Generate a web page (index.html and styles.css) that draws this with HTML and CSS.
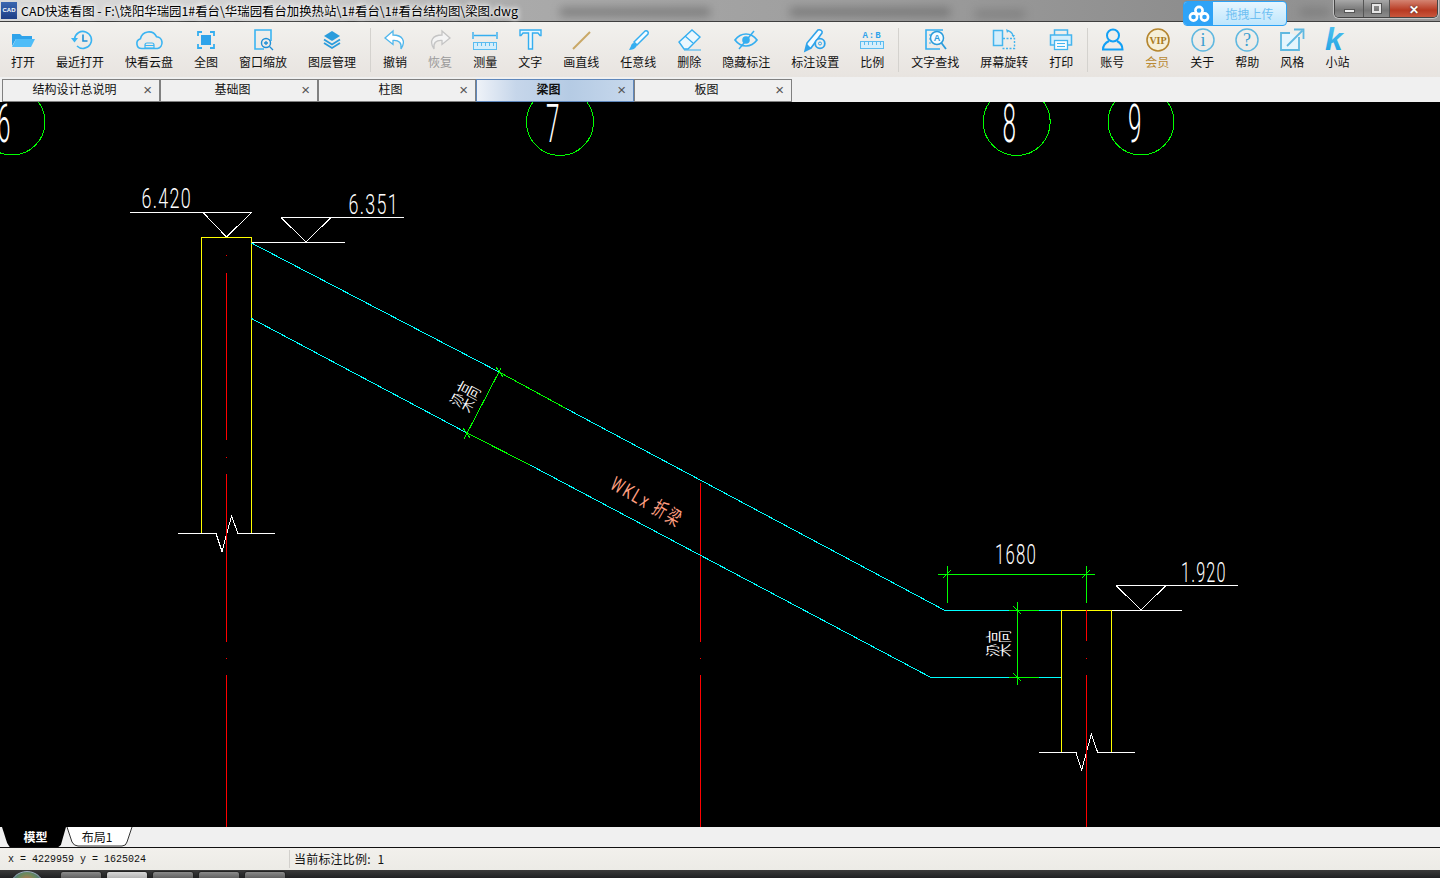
FILE: index.html
```html
<!DOCTYPE html>
<html lang="zh">
<head>
<meta charset="utf-8">
<title>CAD快速看图</title>
<link rel="stylesheet" href="styles.css">
</head>
<body>
<div class="app">
  <header class="titlebar">
    <i class="smear s1"></i><i class="smear s2"></i><i class="smear s3"></i><i class="smear s4"></i>
    <span class="appicon">CAD</span>
    <span class="apptitle">CAD快速看图 - F:\饶阳华瑞园1#看台\华瑞园看台加换热站\1#看台\1#看台结构图\梁图.dwg</span>
    <div class="upload">
      <span class="upload-logo"><svg width="22" height="18" viewBox="0 0 22 18"><g fill="none" stroke="#fff" stroke-width="2.6"><circle cx="11" cy="5.5" r="3.6"/><circle cx="5.5" cy="12" r="3.6"/><circle cx="16.5" cy="12" r="3.6"/></g></svg></span>
      <span class="upload-text">拖拽上传</span>
    </div>
    <div class="winbtns">
      <span class="winbtn min"><i></i></span>
      <span class="winbtn max"><i></i></span>
      <span class="winbtn close">✕</span>
    </div>
  </header>

  <nav class="toolbar">
    <div class="tool"><svg class="ico" viewBox="0 0 30 24"><path d="M4 6h8l2 2h10v3H8l-4 7z" fill="#2fa3ea"/><path d="M4 19 8 11H27L23 19Z" fill="#4fbdf8"/></svg><span>打开</span></div>
    <div class="tool"><svg class="ico" viewBox="0 0 30 24"><path d="M9.5 11a8.5 8.5 0 1 1 2.5 7" fill="none" stroke="#3ab4f2" stroke-width="1.6"/><path d="M6 10h7l-3.5 4.5z" fill="#3ab4f2"/><path d="M18 6.5V13h4.5" fill="none" stroke="#1f8fd6" stroke-width="1.6"/></svg><span>最近打开</span></div>
    <div class="tool"><svg class="ico" viewBox="0 0 30 24"><path d="M8 20.500a5 5 0 0 1-1.500-9.800a8.500 8.500 0 0 1 16-2a6 6 0 0 1 1 11.800z" fill="none" stroke="#3ab4f2" stroke-width="1.600"/><path d="M11 20v-3a2 2 0 0 1 2-2h5a2 2 0 0 1 2 2v3zM11 17.500h9" fill="none" stroke="#3ab4f2" stroke-width="1.200"/></svg><span>快看云盘</span></div>
    <div class="tool"><svg class="ico" viewBox="0 0 30 24"><rect x="10" y="7" width="10" height="10" fill="#2fa3ea"/><path d="M7 8V4h4M19 4h4v4M23 16v4h-4M11 20H7v-4" fill="none" stroke="#35aef0" stroke-width="1.800"/></svg><span>全图</span></div>
    <div class="tool"><svg class="ico" viewBox="0 0 30 24"><path d="M16 21H7V2h16v11" fill="none" stroke="#3ab4f2" stroke-width="1.600"/><circle cx="18" cy="15" r="4.500" fill="none" stroke="#1f8fd6" stroke-width="1.400"/><path d="M21.500 18.500 25 22M16 15h4M18 13v4" stroke="#1f8fd6" stroke-width="1.300"/></svg><span>窗口缩放</span></div>
    <div class="tool"><svg class="ico" viewBox="0 0 30 24"><path d="M15 3 23 8 15 13 7 8Z" fill="#2a9cdc"/><path d="M7 11.500 15 16.500 23 11.500M7 15 15 20 23 15" fill="none" stroke="#2a9cdc" stroke-width="1.800"/></svg><span>图层管理</span></div>
    <div class="sep"></div>
    <div class="tool"><svg class="ico" viewBox="0 0 30 24"><path d="M13 3 5 10 13 16.500V12.500C19 12 22 15 21 21 26.500 12.500 22 7 13 7Z" fill="#fff" stroke="#4fb6ec" stroke-width="1.300"/></svg><span>撤销</span></div>
    <div class="tool off"><svg class="ico" viewBox="0 0 30 24"><path d="M17 3 25 10 17 16.500V12.500C11 12 8 15 9 21 3.500 12.500 8 7 17 7Z" fill="#f4f4f4" stroke="#c4c4c4" stroke-width="1.300"/></svg><span>恢复</span></div>
    <div class="tool"><svg class="ico" viewBox="0 0 30 24"><path d="M3 4v7M27 4v7M4 7.500h22" fill="none" stroke="#35aef0" stroke-width="1.400"/><rect x="3.500" y="14.500" width="23" height="7" fill="#d5eefb" stroke="#5bbcf0"/><path d="M7.500 15v3M11.500 15v3M15.500 15v3M19.500 15v3M23.500 15v3" stroke="#5bbcf0"/></svg><span>测量</span></div>
    <div class="tool"><svg class="ico" viewBox="0 0 30 24"><path d="M5 2H26V7.500H25L23 5H17.500V21H13.500V5H8L6 7.500H5Z" fill="#eaf7fe" stroke="#35aef0" stroke-width="1.400"/></svg><span>文字</span></div>
    <div class="tool"><svg class="ico" viewBox="0 0 30 24"><path d="M7 21 24 4" stroke="#c9a866" stroke-width="2"/></svg><span>画直线</span></div>
    <div class="tool"><svg class="ico" viewBox="0 0 30 24"><path d="M11 14 22 3c2-1 4 1 3 3L14 17z" fill="#f4fbff" stroke="#35aef0" stroke-width="1.500"/><path d="M11 15c-2 0-3 2-3 3l-2 4c3 0 6-1 7-3 1-1 1-2 .5-3z" fill="#35aef0"/></svg><span>任意线</span></div>
    <div class="tool"><svg class="ico" viewBox="0 0 30 24"><path d="M5 14 18 2l8 7-12 12H10z" fill="#eaf7fe" stroke="#35aef0" stroke-width="1.400"/><path d="M11 8l8 7M10 22H27" stroke="#35aef0" stroke-width="1.200"/></svg><span>删除</span></div>
    <div class="tool"><svg class="ico" viewBox="0 0 30 24"><path d="M4 12C10 4 20 4 26 12 20 20 10 20 4 12Z" fill="none" stroke="#35aef0" stroke-width="1.700"/><circle cx="15" cy="12" r="3.800" fill="#35aef0"/><path d="M8 21 23 3" stroke="#35aef0" stroke-width="1.500"/></svg><span>隐藏标注</span></div>
    <div class="tool"><svg class="ico" viewBox="0 0 30 24"><path d="M5 23 7 15 18 2c2-1 5 1 4 3L11 20Z" fill="#f4fbff" stroke="#2fa3ea" stroke-width="1.600"/><path d="M5 23 7 16l4 4z" fill="#2fa3ea"/><circle cx="20" cy="15.500" r="4.800" fill="#f0eeea" stroke="#2fa3ea" stroke-width="1.800"/><circle cx="20" cy="15.500" r="1.500" fill="none" stroke="#2fa3ea"/></svg><span>标注设置</span></div>
    <div class="tool"><svg class="ico" viewBox="0 0 30 24"><text x="15" y="10" class="abc">A:B</text><rect x="3.500" y="13.500" width="23" height="7" fill="#d5eefb" stroke="#5bbcf0"/><path d="M7.500 14v3M11.500 14v3M15.500 14v3M19.500 14v3M23.500 14v3" stroke="#5bbcf0"/></svg><span>比例</span></div>
    <div class="sep"></div>
    <div class="tool"><svg class="ico" viewBox="0 0 30 24"><path d="M20 21H6V2h17" fill="none" stroke="#35aef0" stroke-width="1.600"/><path d="M9 7h3M9 11h2M9 15h2" stroke="#35aef0"/><circle cx="17" cy="10" r="6.500" fill="#f4fbff" stroke="#2a9cdc" stroke-width="1.500"/><text x="17" y="13" class="search-a">A</text><path d="M21.500 15 26 21" stroke="#2a9cdc" stroke-width="1.800"/></svg><span>文字查找</span></div>
    <div class="tool"><svg class="ico" viewBox="0 0 30 24"><rect x="4.500" y="2.500" width="9" height="15" fill="#d5eefb" stroke="#45b5ee" stroke-width="1.500"/><path d="M14 10.500h11.500v10h-12" fill="none" stroke="#45b5ee" stroke-width="1.400" stroke-dasharray="2 1.500"/><path d="M18 2.500c3 .5 5 2 6 5" fill="none" stroke="#45b5ee" stroke-width="1.300"/><path d="M17 1l3 1.500-2 2.500zM22.500 7h3.500l-1.500 2.500z" fill="#45b5ee"/></svg><span>屏幕旋转</span></div>
    <div class="tool"><svg class="ico" viewBox="0 0 30 24"><path d="M8.500 7V2h13v5" fill="none" stroke="#45b5ee" stroke-width="1.500"/><path d="M8 17H4.500V7h21v10H22" fill="#d5eefb" stroke="#45b5ee" stroke-width="1.500"/><rect x="8.500" y="12.500" width="13" height="9" fill="#f8fcff" stroke="#45b5ee" stroke-width="1.300"/><path d="M11 15.500h8M11 18.500h8" stroke="#45b5ee"/></svg><span>打印</span></div>
    <div class="sep"></div>
    <div class="tool"><svg class="ico" viewBox="0 0 30 24"><ellipse cx="16" cy="7.500" rx="6" ry="6" fill="none" stroke="#12a0f5" stroke-width="2"/><path d="M12 13C8 15 6 18 6 21.500H25.500C25.500 18 24 15 20 13" fill="none" stroke="#12a0f5" stroke-width="2"/></svg><span>账号</span></div>
    <div class="tool vip"><svg class="ico" viewBox="0 0 30 24"><circle cx="16" cy="12" r="11" fill="#f6f0d8" stroke="#b5862f" stroke-width="1.600"/><text x="16" y="15.500" class="viptext">VIP</text></svg><span>会员</span></div>
    <div class="tool"><svg class="ico" viewBox="0 0 30 24"><circle cx="16" cy="12" r="11" fill="none" stroke="#5fb8e0" stroke-width="1.500"/><text x="16" y="18" class="serifmark">i</text></svg><span>关于</span></div>
    <div class="tool"><svg class="ico" viewBox="0 0 30 24"><circle cx="15" cy="12" r="11" fill="none" stroke="#5fb8e0" stroke-width="1.500"/><text x="15" y="18" class="serifmark">?</text></svg><span>帮助</span></div>
    <div class="tool"><svg class="ico" viewBox="0 0 30 24"><path d="M22 9v13H4V5h9" fill="#e6f5fd" stroke="#5fb8e0" stroke-width="1.800"/><path d="M17 1.500h9.500V11" fill="none" stroke="#5fb8e0" stroke-width="1.800"/><path d="M25.500 2.500 10 18" stroke="#5fb8e0" stroke-width="1.800"/></svg><span>风格</span></div>
    <div class="tool"><svg class="ico" viewBox="0 0 30 24"><defs><linearGradient id="kg" x1="0" y1="0" x2="0" y2="1"><stop offset="0" stop-color="#56c6f2"/><stop offset="1" stop-color="#1c9ee0"/></linearGradient></defs><text x="3" y="22" class="klogo" fill="url(#kg)">k</text></svg><span>小站</span></div>
  </nav>

  <div class="tabs">
    <div class="tab"><span>结构设计总说明</span><b>×</b></div>
    <div class="tab"><span>基础图</span><b>×</b></div>
    <div class="tab"><span>柱图</span><b>×</b></div>
    <div class="tab active"><span>梁图</span><b>×</b></div>
    <div class="tab"><span>板图</span><b>×</b></div>
  </div>

  <main class="canvas">
    <svg class="drawing" width="1440" height="725" viewBox="0 102 1440 725">
      <g class="cad" fill="none">
        <g stroke="#00ff00">
          <circle cx="12" cy="122" r="33"/>
          <circle cx="560" cy="122" r="33.500"/>
          <circle cx="1016.700" cy="122" r="33.500"/>
          <circle cx="1141" cy="122" r="33"/>
        </g>
        <g stroke="#ffffff">
          <path d="M130 212.500H251.500M203 212.500 226.500 237 251.500 212.500"/>
          <path d="M281 217.500H404M281 217.500 306 242 331 217.500M251.500 242.500H345"/>
          <path d="M178 533.500H216L222 551.500 231.500 516 238 533.500H275"/>
          <path d="M1111 610.500H1182M1116 585.500H1238M1116 585.500 1141 610 1166 585.500"/>
          <path d="M1039 752.500H1076L1081.700 770 1091.300 734 1097.700 752.500H1135"/>
        </g>
        <g stroke="#ffff00">
          <path d="M201.500 533V237.500H251.500V533"/>
          <path d="M1061.500 752V610.500H1111.500V752"/>
        </g>
        <g stroke="#ff0000">
          <path d="M226.500 255v1M226.500 273V440M226.500 457v1M226.500 474V642M226.500 658v1M226.500 675V827"/>
          <path d="M700.500 483V642M700.500 658v1M700.500 675V827"/>
          <path d="M1086.500 610V641M1086.500 658v1M1086.500 675V827"/>
        </g>
        <g stroke="#00ffff">
          <path d="M251.500 243 499 372M566 408.500 945 610.500H1009M1039 610.500H1061"/>
          <path d="M251.500 318.500 467 433M530 465 931 677.500H1009M1039 677.500H1061"/>
        </g>
        <g stroke="#00ff00">
          <path d="M499 372 566 408.500M467 433 530 465"/>
          <path d="M1009 610.500H1039M1009 677.500H1039"/>
          <path d="M464 439 501 368M496 367 503 377M463 428 470 438"/>
          <path d="M938 574.500H1095M947.500 566V603M1086.500 566V603M943 578 951 570M1082 578 1090 570"/>
          <path d="M1017.500 602V685M1013 606 1021 614M1013 673 1021 681"/>
        </g>
      </g>
      <g class="cadtext">
        <text transform="translate(-3 142) scale(.45 1)" class="grid">6</text>
        <text transform="translate(546 142) scale(.45 1)" class="grid">7</text>
        <text transform="translate(1002.500 142) scale(.45 1)" class="grid">8</text>
        <text transform="translate(1128 142) scale(.45 1)" class="grid">9</text>
        <text transform="translate(141.500 208) scale(.64 1)" class="dim">6.420</text>
        <text transform="translate(348.500 213.500) scale(.64 1)" class="dim">6.351</text>
        <text transform="translate(995 564) scale(.6 1)" class="dim">1680</text>
        <text transform="translate(1181 582) scale(.58 1)" class="dim">1.920</text>
        <text transform="translate(468 413) rotate(-62) scale(.5 1)" class="beam">梁高</text>
        <text transform="translate(1009 657) rotate(-90) scale(.5 1)" class="beam">梁高</text>
        <text transform="translate(609 488) rotate(30) scale(.68 1)" class="wkl">WKLx 折梁</text>
      </g>
    </svg>
  </main>

  <div class="sheets">
    <div class="sheet on">模型</div>
    <div class="sheet off2">
      <svg class="sheet-shape" width="68" height="20" viewBox="0 0 68 20"><path d="M1 0 6 15Q8 19 12 19H56Q60 19 61 15L66 0" fill="#fff" stroke="#333"/></svg>
      <span>布局1</span>
    </div>
  </div>

  <footer class="status">
    <span class="coords">x = 4229959 y = 1625024</span>
    <span class="scale">当前标注比例: 1</span>
  </footer>

  <div class="taskbar">
    <i class="orb"></i>
    <div class="taskbtns"><i></i><i class="lit"></i><i></i><i></i><i></i></div>
  </div>
</div>
</body>
</html>
```

FILE: styles.css
```css
* { box-sizing: border-box; }
html, body { margin: 0; height: 100%; background: #000; overflow: hidden; }
body { font-family: "Noto Sans CJK SC", "Liberation Sans", sans-serif; color: #111; }
.app { width: 1440px; height: 878px; display: flex; flex-direction: column; overflow: hidden; }

/* title bar */
.titlebar {
  height: 22px; flex: none; position: relative; display: flex; align-items: center;
  background: linear-gradient(90deg, #d9d9d9 0, #cfcfcf 300px, #aaaaaa 520px, #9c9c9c 900px, #8d8d8d 1200px, #999 1440px);
  border-bottom: 1px solid #3f3f3f;
}
.smear { position: absolute; height: 8px; top: 8px; background: #555; filter: blur(5px); opacity: .55; }
.s1 { left: 560px; width: 150px; }
.s2 { left: 790px; width: 160px; }
.s3 { left: 975px; width: 50px; top: 10px; opacity: .35; }
.s4 { left: 1300px; width: 30px; opacity: .35; }
.appicon {
  width: 16px; height: 17px; margin-left: 1px; background: linear-gradient(#3a66b0, #1f3f86); color: #fff;
  font: 700 6px/17px "Liberation Sans", sans-serif; text-align: center; position: relative; flex: none;
}
.apptitle { margin-left: 4px; font-size: 12.400px; line-height: 20px; color: #000; white-space: nowrap; position: relative; text-shadow: 0 0 6px #fff, 0 0 6px #fff, 0 0 3px #eee; }
.upload {
  position: absolute; left: 1183px; top: 1px; width: 104px; height: 25px; z-index: 2; display: flex;
  border: 1px solid #2da2f5; border-radius: 4px; overflow: hidden; background: linear-gradient(#e6f6ff, #bfe6fc);
}
.upload-logo { width: 29px; background: #2ea3f7; display: flex; align-items: center; justify-content: center; }
.upload-text { flex: 1; text-align: center; color: #6fc0f2; font-size: 12px; line-height: 23px; }
.winbtns {
  position: absolute; right: 2px; top: 0; width: 104px; height: 18px; display: flex; overflow: hidden;
  border: 1px solid #444; border-top: none; border-radius: 0 0 5px 5px; box-shadow: 0 0 0 1px rgba(255,255,255,.45);
}
.winbtn { height: 100%; display: flex; align-items: center; justify-content: center; background: linear-gradient(#a8a8a8, #777 60%, #8c8c8c); }
.winbtn.min { width: 29px; border-right: 1px solid #555; }
.winbtn.max { width: 26px; border-right: 1px solid #555; }
.winbtn.close { flex: 1; background: linear-gradient(#d48472, #b83a22 60%, #c9563c); color: #fff; font-size: 12px; font-weight: 700; line-height: 1; text-shadow: 0 0 2px #333; }
.min i { width: 11px; height: 4px; background: #eee; border: 1px solid #555; margin-top: 4px; }
.max i { width: 9px; height: 9px; border: 2px solid #e6e6e6; outline: 1px solid #555; }

/* toolbar */
.toolbar {
  height: 55px; flex: none; display: flex; gap: 21px; padding: 6px 0 0 11px; position: relative; z-index: 1;
  background: linear-gradient(#f2f1ee, #e8e4e0);
}
.tool { display: flex; flex-direction: column; align-items: center; flex: none; font-size: 12px; line-height: 15px; white-space: nowrap; }
.tool span { margin-top: 2px; }
.ico { width: 30px; height: 24px; margin: 0 -4px; flex: none; display: block; overflow: visible; }
.off span { color: #9a9a9a; }
.vip span { color: #b98a34; }
.sep { width: 1px; height: 44px; margin: 0 -9px 0 -7px; background: #d4d2ce; flex: none; }
.abc { font: 700 9px "Liberation Mono", monospace; fill: #2fa3ea; text-anchor: middle; letter-spacing: 1px; }
.search-a { font: 700 9px "Liberation Sans", sans-serif; fill: #2a9cdc; text-anchor: middle; }
.viptext { font: 700 10px "Liberation Serif", serif; fill: #a87a20; text-anchor: middle; }
.serifmark { font: 400 18px "Liberation Serif", serif; fill: #3a9fd0; text-anchor: middle; }
.klogo { font: italic 700 32px "Liberation Sans", sans-serif; }

/* document tabs */
.tabs { height: 25px; flex: none; display: flex; padding: 2px 0 0 2px; background: #f0f0f0; align-items: stretch; }
.tab {
  width: 158px; height: 23px; display: flex; align-items: center; position: relative;
  border: 1px solid #808080; background: #f0f0f0;
  font-size: 12px; line-height: 18px; padding: 0 13px 3px 0;
}
.tab span { flex: 1; text-align: center; }
.tab b { position: absolute; right: 7px; top: 1px; font: 400 15px/17px "Liberation Sans", sans-serif; color: #555; }
.tab.active { background: linear-gradient(90deg, #eef2f8 0, #c6d6ea 25%, #b5cbe4 60%, #c7d8ec 100%); border-color: #5f87bb; font-weight: 700; }

/* drawing */
.canvas { flex: 1; min-height: 0; background: #000; position: relative; overflow: hidden; }
.drawing { display: block; }
.cad { stroke-width: 1; shape-rendering: crispEdges; }
.cadtext text { fill: #fff; }
.grid { font: 300 54px "Roboto", "Liberation Sans", sans-serif; }
.dim { font: 300 28px "Roboto", "Liberation Sans", sans-serif; letter-spacing: 2px; }
.beam { font: 300 27px "Noto Sans CJK SC", sans-serif; }
.cadtext .wkl { font: 400 20px "Roboto", "Noto Sans CJK SC", sans-serif; fill: #ff9f80; letter-spacing: 3px; }

/* sheet tabs */
.sheets { height: 21px; flex: none; display: flex; background: #f0f0f0; border-bottom: 1px solid #111; padding-left: 2px; }
.sheet { height: 20px; font-size: 12px; line-height: 20px; text-align: center; }
.sheet.on { width: 64px; background: #000; color: #fff; font-weight: 700; padding-left: 3px; clip-path: polygon(0 0, 100% 0, 92% 90%, 88% 100%, 12% 100%, 8% 80%); }
.off2 { width: 68px; position: relative; }
.off2 span { position: relative; margin-right: 6px; }
.sheet-shape { position: absolute; left: 0; top: 0; }

/* status bar */
.status { height: 22px; flex: none; display: flex; align-items: center; background: linear-gradient(#f2f0ec, #ecebe6); }
.coords { width: 281px; margin-left: 8px; font: 10px "Liberation Mono", monospace; }
.scale { height: 18px; border-left: 1px solid #d2d0cc; padding-left: 4px; font-size: 12px; line-height: 18px; word-spacing: 4px; letter-spacing: .2px; }

/* OS taskbar */
.taskbar { height: 8px; flex: none; position: relative; display: flex; background: linear-gradient(#3a3a3a, #1f2022); overflow: hidden; }
.orb { position: absolute; left: 9px; top: 1px; width: 36px; height: 36px; border-radius: 50%; background: radial-gradient(circle at 50% 30%, #d8704c 0, #6b8a5c 30%, #3c6f99 60%, #1d3d63 100%); border: 1px solid #9ab; }
.taskbtns { display: flex; gap: 4px; margin-left: 60px; padding-top: 1px; }
.taskbtns i { width: 42px; height: 12px; border-radius: 3px 3px 0 0; background: linear-gradient(#8a8a8a, #444); border: 1px solid #222; }
.taskbtns i.lit { background: linear-gradient(#d8d8d8, #999); }
```
